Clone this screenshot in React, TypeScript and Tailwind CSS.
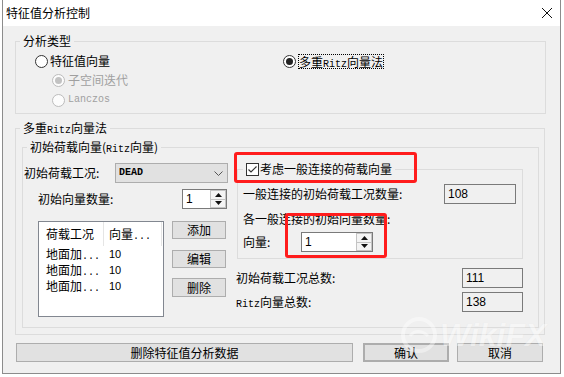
import React from "react";

function Radio({ checked, disabled }: { checked?: boolean; disabled?: boolean }) {
  return (
    <span
      className={`w-[13px] h-[13px] shrink-0 rounded-full border flex items-center justify-center ${
        disabled ? "border-[#bcbcbc] bg-[#fcfcfc]" : "border-[#333333] bg-white"
      }`}
    >
      {checked && (
        <span className={`w-[7px] h-[7px] rounded-full ${disabled ? "bg-[#c2c2c2]" : "bg-[#222222]"}`} />
      )}
    </span>
  );
}

function Btn({ children, className = "" }: { children: React.ReactNode; className?: string }) {
  return (
    <div className={`flex items-center justify-center bg-[#e1e1e1] border border-[#adadad] ${className}`}>
      {children}
    </div>
  );
}

function Spin({ value, className = "" }: { value: string; className?: string }) {
  return (
    <div className={`h-[20px] flex border border-[#7a7a7a] bg-white ${className}`}>
      <div className="flex-1 pl-[3px] flex items-center font-['Liberation_Sans',sans-serif]">{value}</div>
      <div className="w-[16px] flex flex-col bg-[#f4f4f4]">
        <div className="flex-1 flex items-center justify-center border border-[#c4c4c4]">
          <svg width="7" height="4" viewBox="0 0 7 4">
            <polygon points="3.5,0 7,4 0,4" fill="#111" />
          </svg>
        </div>
        <div className="flex-1 flex items-center justify-center border border-t-0 border-[#c4c4c4]">
          <svg width="7" height="4" viewBox="0 0 7 4">
            <polygon points="0,0 7,0 3.5,4" fill="#111" />
          </svg>
        </div>
      </div>
    </div>
  );
}

function Field({ value, className = "" }: { value: string; className?: string }) {
  return (
    <div
      className={`h-[20px] pl-[3px] flex items-center border border-[#7a7a7a] bg-[#f0f0f0] font-['Liberation_Sans',sans-serif] ${className}`}
    >
      {value}
    </div>
  );
}

// SimSun-like half width latin
const Mono = ({ children }: { children: React.ReactNode }) => (
  <span className="font-['Liberation_Mono',monospace] text-[10px] leading-none">{children}</span>
);

export default function App() {
  return (
    <div className="relative w-[564px] h-[377px] overflow-hidden bg-white text-[12px] leading-[16px] text-black font-['Noto_Sans_CJK_SC','Liberation_Sans',sans-serif]">
      <div className="ml-[2px] w-[559px] h-[374px] flex flex-col border-x border-b border-[#8c8c8c] bg-[#f0f0f0]">
        {/* title bar */}
        <div className="h-[26px] shrink-0 flex items-center justify-between pl-[3px] pr-[8px] bg-white">
          <span>特征值分析控制</span>
          <svg width="10" height="10" viewBox="0 0 10 10">
            <path d="M0 0L10 10M10 0L0 10" stroke="#111" strokeWidth="1" />
          </svg>
        </div>

        <div className="flex flex-col pl-[12px]">
          {/* 分析类型 */}
          <fieldset className="mt-[7px] w-[531px] h-[81px] border border-[#dcdcdc]">
            <legend className="ml-[4px] px-[3px] h-[16px]">分析类型</legend>
            <div className="mt-[4px] h-[16px] flex items-center pl-[19px]">
              <div className="w-[248px] flex items-center gap-[2px]">
                <Radio />
                <span>特征值向量</span>
              </div>
              <div className="flex items-center gap-[2px]">
                <Radio checked />
                <span className="inline-block h-[15px] leading-[13px] border border-dotted border-black">
                  多重<Mono>Ritz</Mono>向量法
                </span>
              </div>
            </div>
            <div className="mt-[3px] h-[16px] flex items-center gap-[3px] pl-[36px] text-[#a0a0a0]">
              <Radio checked disabled />
              <span>子空间迭代</span>
            </div>
            <div className="mt-[4px] h-[16px] flex items-center gap-[3px] pl-[36px] text-[#a0a0a0]">
              <Radio disabled />
              <Mono>Lanczos</Mono>
            </div>
          </fieldset>

          {/* 多重Ritz向量法 */}
          <fieldset className="mt-[6px] w-[530px] h-[215px] border border-[#dcdcdc]">
            <legend className="ml-[4px] px-[3px] h-[16px]">
              多重<Mono>Ritz</Mono>向量法
            </legend>
            <fieldset className="ml-[6px] mt-[3px] w-[517px] h-[189px] border border-[#dcdcdc]">
              <legend className="ml-[4px] px-[3px] h-[16px]">
                初始荷载向量(<Mono>Ritz</Mono>向量)
              </legend>
              <div className="flex">
                {/* left column */}
                <div className="w-[213px] flex flex-col">
                  <div className="mt-[8px] h-[20px] flex items-center">
                    <span className="w-[92px] pl-[1px]">初始荷载工况:</span>
                    <div className="w-[113px] h-[20px] flex items-center justify-between pl-[3px] pr-[4px] bg-[#e1e1e1] border border-[#adadad]">
                      <span className="font-['Liberation_Mono',monospace] text-[10px] font-bold">DEAD</span>
                      <svg width="9" height="5" viewBox="0 0 9 5">
                        <polyline points="0.5,0.5 4.5,4.5 8.5,0.5" fill="none" stroke="#555" strokeWidth="1" />
                      </svg>
                    </div>
                  </div>
                  <div className="mt-[6px] h-[20px] flex items-center">
                    <span className="w-[159px] pl-[15px]">初始向量数量:</span>
                    <Spin value="1" className="w-[45px]" />
                  </div>
                  <div className="mt-[12px] flex">
                    <div className="ml-[15px] w-[126px] h-[96px] border border-[#828790] bg-white flex flex-col">
                      <div className="h-[24px] flex items-center">
                        <span className="w-[64px] pl-[7px]">荷载工况</span>
                        <span className="h-full border-l border-[#e5e5e5]" />
                        <span className="w-[57px] pl-[5px]">
                          向量<Mono>...</Mono>
                        </span>
                        <span className="h-full border-l border-[#e5e5e5]" />
                      </div>
                      {[0, 1, 2].map((i) => (
                        <div key={i} className="h-[16px] flex items-center">
                          <span className="w-[65px] pl-[7px]">
                            地面加<Mono>...</Mono>
                          </span>
                          <span className="pl-[5px] font-['Liberation_Sans',sans-serif] text-[11px]">10</span>
                        </div>
                      ))}
                    </div>
                    <div className="ml-[8px] w-[54px] flex flex-col">
                      <Btn className="h-[18px]">添加</Btn>
                      <Btn className="mt-[11px] h-[18px]">编辑</Btn>
                      <Btn className="mt-[10px] h-[19px]">删除</Btn>
                    </div>
                  </div>
                </div>

                {/* right column */}
                <div className="w-[288px] flex flex-col">
                  <fieldset className="ml-[1px] mt-[6px] w-[286px] h-[98px] border border-[#dcdcdc]">
                    <legend className="ml-[5px] px-[3px] h-[16px]">
                      <span className="h-[16px] flex items-center gap-[1px]">
                        <span className="w-[13px] h-[13px] border border-[#333333] bg-white flex items-center justify-center">
                          <svg width="11" height="11" viewBox="0 0 11 11">
                            <polyline points="1.5,5.5 4,8 9.5,2.5" fill="none" stroke="#333" strokeWidth="1.2" />
                          </svg>
                        </span>
                        <span>考虑一般连接的荷载向量</span>
                      </span>
                    </legend>
                    <div className="mt-[7px] h-[20px] flex items-center pl-[5px]">
                      <span className="w-[201px]">一般连接的初始荷载工况数量:</span>
                      <Field value="108" className="w-[72px]" />
                    </div>
                    <div className="mt-[7px] h-[16px] flex items-center pl-[5px]">各一般连接的初始向量数量:</div>
                    <div className="mt-[5px] h-[20px] flex items-center pl-[5px]">
                      <span className="w-[58px]">向量:</span>
                      <Spin value="1" className="w-[72px]" />
                    </div>
                  </fieldset>
                  <div className="mt-[9px] h-[20px] flex items-center">
                    <span className="w-[226px]">初始荷载工况总数:</span>
                    <Field value="111" className="w-[61px]" />
                  </div>
                  <div className="mt-[4px] h-[20px] flex items-center">
                    <span className="w-[226px]">
                      <Mono>Ritz</Mono>向量总数:
                    </span>
                    <Field value="138" className="w-[61px]" />
                  </div>
                </div>
              </div>
            </fieldset>
          </fieldset>

          {/* bottom buttons */}
          <div className="mt-[8px] h-[19px] flex">
            <Btn className="ml-[1px] w-[337px]">删除特征值分析数据</Btn>
            <Btn className="ml-[10px] w-[86px] border-2 border-[#0078d7]">确认</Btn>
            <Btn className="ml-[8px] w-[86px]">取消</Btn>
          </div>
        </div>
      </div>

      {/* red annotation boxes */}
      <div className="absolute left-[234px] top-[152px] w-[183px] h-[31px] border-[3px] border-[#ff1c1c] rounded-[3px]" />
      <div className="absolute left-[285px] top-[213px] w-[102px] h-[45px] border-[3px] border-[#ff1c1c] rounded-[3px]" />

      {/* watermark */}
      <div className="absolute left-[400px] top-[316px] flex items-center gap-[2px] opacity-40 pointer-events-none">
        <svg width="38" height="38" viewBox="0 0 38 38">
          <circle cx="19" cy="19" r="16" fill="none" stroke="#ffffff" strokeWidth="4" />
          <path d="M10 20c4-6 12-6 18 0" fill="none" stroke="#ffffff" strokeWidth="3" />
        </svg>
        <span className="text-[32px] leading-[32px] font-bold italic text-white font-['Liberation_Sans',sans-serif] [text-shadow:0_0_1px_rgba(0,0,0,0.1)]">
          WikiFX
        </span>
      </div>
    </div>
  );
}
